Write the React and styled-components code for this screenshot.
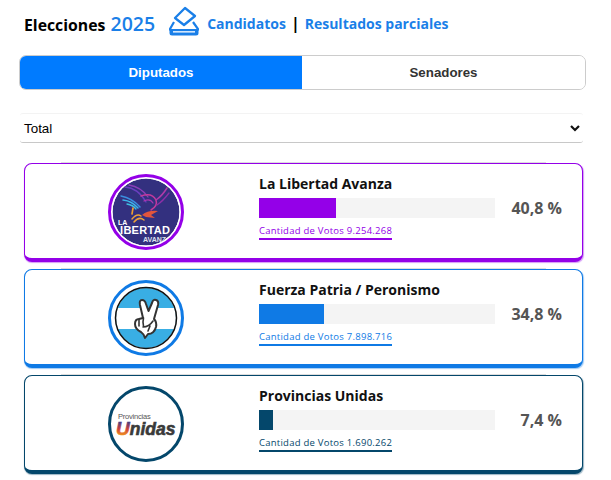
import React from "react";
import styled, { createGlobalStyle } from "styled-components";

const Global = createGlobalStyle`
  html, body { margin: 0; padding: 0; background: #fff; }
  body { font-family: "Open Sans", sans-serif; overflow: hidden; }
  * { box-sizing: border-box; }
`;

const Page = styled.div`
  width: 611px;
  height: 480px;
  padding: 11px 25px 0 19px;
  overflow: hidden;
`;
const Header = styled.header`
  display: flex;
  align-items: center;
  height: 24px;
  margin-left: 5px;
`;
const Title = styled.h1`
  margin: 0;
  font-size: 15.8px;
  font-weight: 700;
  color: #000;
  white-space: nowrap;
  span { color: #1a7fe8; font-size: 19.5px; font-weight: 600; margin-left: 1px; }
`;
const BallotIcon = styled.svg`
  width: 30px;
  height: 30px;
  margin: -5px 8px 0 14px;
  flex: none;
`;
const NavLink = styled.a`
  color: #1a7fe8;
  font-size: 14px;
  font-weight: 700;
  white-space: nowrap;
`;
const Sep = styled.span`
  color: #000;
  font-size: 16px;
  font-weight: 700;
  margin: 0 5px;
`;
const Tabs = styled.div`
  display: grid;
  grid-template-columns: 282px 1fr;
  height: 35px;
  margin-top: 20px;
  border: 1px solid #ccc;
  border-radius: 7px;
  overflow: hidden;
`;
const Tab = styled.div`
  display: flex;
  align-items: center;
  justify-content: center;
  font-family: "Liberation Sans", Arial, sans-serif;
  font-size: 13.3px;
  font-weight: 700;
  background: ${p => (p.$active ? "#007bff" : "#fff")};
  color: ${p => (p.$active ? "#fff" : "#333")};
`;
const Select = styled.div`
  display: flex;
  align-items: center;
  justify-content: space-between;
  height: 30px;
  margin: 23px 3px 0 1px;
  padding: 0 3px 0 4px;
  font-family: "Liberation Sans", Arial, sans-serif;
  font-size: 13.4px;
  color: #000;
  border-radius: 3px;
  border-top: 1px solid #f3f3f3;
  border-bottom: 1px solid #c8c8c8;
`;
const Chevron = styled.svg`
  width: 10px;
  height: 8px;
`;
const Cards = styled.div`
  display: flex;
  flex-direction: column;
  gap: 7px;
  margin: 20px 3px 0 5px;
`;
const Card = styled.article`
  position: relative;
  display: grid;
  grid-template-columns: 234px 236px 1fr;
  height: 99px;
  border: 1px solid ${p => p.$color};
  border-bottom-width: 4px;
  border-radius: 8px;
  box-shadow: 0.5px 1px 1px ${p => p.$color}66;
  background: #fff;
  &::before {
    content: "";
    position: absolute;
    top: -2px;
    left: 36px;
    right: 36px;
    height: 1px;
    background: #ddd;
  }
`;
const LogoCell = styled.div`
  display: flex;
  align-items: center;
  justify-content: center;
  padding: 0 0 0 8px;
`;
const LogoSvg = styled.svg`
  width: 76px;
  height: 76px;
  margin-top: 1px;
`;
const Info = styled.div`
  display: flex;
  flex-direction: column;
  padding-top: 10px;
`;
const Name = styled.div`
  font-size: 14px;
  font-weight: 700;
  line-height: 20px;
  color: #111;
`;
const Track = styled.div`
  height: 20px;
  margin-top: 4px;
  background: #f4f4f4;
`;
const Fill = styled.div`
  height: 100%;
  background: ${p => p.$color};
`;
const Votes = styled.div`
  align-self: flex-start;
  margin-top: 6px;
  font-size: 9.5px;
  line-height: 14px;
  letter-spacing: 0.25px;
  color: ${p => p.$color};
  border-bottom: 2px solid ${p => p.$color};
`;
const Percent = styled.div`
  display: flex;
  align-items: center;
  justify-content: flex-end;
  padding: 0 20px 7px 0;
  font-size: 16px;
  font-weight: 700;
  color: #555;
`;

const Libertad = () => (
  <LogoSvg viewBox="0 0 76 76">
    <circle cx="38" cy="38" r="36.5" fill="#fff" stroke="#9400e8" strokeWidth="3" />
    <clipPath id="lla"><circle cx="38" cy="38" r="33.5" /></clipPath>
    <g clipPath="url(#lla)">
      <circle cx="38" cy="38" r="33.5" fill="#33307f" />
      <g fill="none" strokeLinecap="round">
        <path d="M17 13 Q30 14 38 28" stroke="#6a3fc0" strokeWidth="1.3" />
        <path d="M21 11 Q33 13 40 23" stroke="#8a3fb8" strokeWidth="1.3" />
        <path d="M13 22 Q24 24 32 33" stroke="#3a8fe0" strokeWidth="1.5" />
        <path d="M15 26 Q24 27 30 34" stroke="#3cb4e8" strokeWidth="1.5" />
        <path d="M19 30 Q25 31 28 35" stroke="#3fc0e0" strokeWidth="1.3" />
        <path d="M33 22 Q44 18 48 26 Q50 32 43 36" stroke="#c23a9c" strokeWidth="1.5" />
        <path d="M36 27 Q42 24 45 29" stroke="#a936b0" strokeWidth="1.2" />
        <path d="M48 26 Q54 22 59 14" stroke="#b03aa8" strokeWidth="1.5" />
        <path d="M49 31 Q55 27 61 19" stroke="#8d2fa8" strokeWidth="1.3" />
        <path d="M25 34 L24 40" stroke="#f0a030" strokeWidth="1.6" />
        <path d="M24 45 Q29 39 33 42 M26 48 Q31 42 36 46" stroke="#eda23a" strokeWidth="1.5" />
      </g>
      <path d="M34 41 Q40 36 50 37 L43 41 L47 44 L38 43Z" fill="#e2553c" />
      <text x="10" y="51" fontFamily="Liberation Sans, sans-serif" fontSize="7" fontWeight="700" fill="#fff">LA</text>
      <text x="5" y="60" fontFamily="Liberation Sans, sans-serif" fontSize="11" fontWeight="700" letterSpacing="0.3" fill="#fff">LIBERTAD</text>
      <text x="35" y="67.5" fontFamily="Liberation Sans, sans-serif" fontSize="7" fontWeight="700" fill="#dfe0ee">AVANZA</text>
    </g>
  </LogoSvg>
);

const Fuerza = () => (
  <LogoSvg viewBox="0 0 76 76">
    <circle cx="38" cy="38" r="36.5" fill="#fff" stroke="#0f7ae5" strokeWidth="3" />
    <clipPath id="fp"><circle cx="38" cy="38" r="30" /></clipPath>
    <g clipPath="url(#fp)">
      <rect width="76" height="76" fill="#39aee4" />
      <rect y="28" width="76" height="21" fill="#fff" />
    </g>
    <circle cx="38" cy="38" r="30.5" fill="none" stroke="#111" strokeWidth="1.5" />
    <path d="M32 25 Q31 20 34 20 Q37 20 38 24 L40.5 31 L44 23 Q45 19 48 20 Q51 21 50 25 L46 39 Q49 42 48 47 Q46 54 40 54 L37 58 Q36 54 33 52 Q27 49 27 44 Q27 39 31 39 L35 38 Z" fill="#fff" stroke="#333" strokeWidth="2" strokeLinejoin="round" />
    <path d="M31 39 L31 46 M35.5 38 Q34.5 42 35.5 46 M35 47 Q41 47 45 41 M40 51 L42 46" fill="none" stroke="#333" strokeWidth="1.6" strokeLinecap="round" />
  </LogoSvg>
);

const Unidas = () => (
  <LogoSvg viewBox="0 0 76 76">
    <defs>
      <linearGradient id="un" x1="0" y1="0" x2="0" y2="1">
        <stop offset="0.15" stopColor="#2d3d90" />
        <stop offset="0.55" stopColor="#d0403a" />
        <stop offset="0.85" stopColor="#f0941f" />
      </linearGradient>
    </defs>
    <circle cx="38" cy="38" r="36.5" fill="#fff" stroke="#04476b" strokeWidth="3" />
    <text x="10" y="33" fontFamily="Liberation Sans, sans-serif" fontSize="7.5" letterSpacing="-0.2" fill="#555">Provincias</text>
    <text x="8" y="48.5" fontFamily="Liberation Sans, sans-serif" fontStyle="italic" fontWeight="700" strokeWidth="0.6">
      <tspan fontSize="19" fill="url(#un)" stroke="url(#un)">U</tspan>
      <tspan fontSize="17.5" fill="#3a3a3a" stroke="#3a3a3a">nidas</tspan>
    </text>
  </LogoSvg>
);

const data = [
  { name: "La Libertad Avanza", color: "#9400e8", pct: 32.7, label: "40,8 %", votes: "9.254.268", Logo: Libertad },
  { name: "Fuerza Patria / Peronismo", color: "#0f7ae5", pct: 27.6, label: "34,8 %", votes: "7.898.716", Logo: Fuerza },
  { name: "Provincias Unidas", color: "#04476b", pct: 5.9, label: "7,4 %", votes: "1.690.262", Logo: Unidas },
];

export default function App() {
  return (
    <Page>
      <Global />
      <Header>
        <Title>Elecciones <span>2025</span></Title>
        <BallotIcon viewBox="0 0 30 30">
          <path d="M16 2 L26 10 L15 19 L6 12 Z" fill="none" stroke="#1a7fe8" strokeWidth="2.3" strokeLinejoin="round" />
          <path d="M5 16 L1 23 Q0.8 24 2 24 H28 Q29.2 24 29 23 L24 16" fill="none" stroke="#1a7fe8" strokeWidth="2.2" />
          <path d="M0.5 23 H29.5 V27 Q29.5 29.5 27 29.5 H3 Q0.5 29.5 0.5 27 Z" fill="#1a7fe8" />
          <rect x="4" y="25.2" width="22" height="1.3" fill="#fff" />
        </BallotIcon>
        <NavLink>Candidatos</NavLink>
        <Sep>|</Sep>
        <NavLink>Resultados parciales</NavLink>
      </Header>
      <Tabs>
        <Tab $active>Diputados</Tab>
        <Tab>Senadores</Tab>
      </Tabs>
      <Select>
        <span>Total</span>
        <Chevron viewBox="0 0 10 8">
          <path d="M1 2 L5 6 L9 2" fill="none" stroke="#111" strokeWidth="2.2" />
        </Chevron>
      </Select>
      <Cards>
        {data.map(d => (
          <Card key={d.name} $color={d.color}>
            <LogoCell><d.Logo /></LogoCell>
            <Info>
              <Name>{d.name}</Name>
              <Track><Fill $color={d.color} style={{ width: `${d.pct}%` }} /></Track>
              <Votes $color={d.color}>Cantidad de Votos {d.votes}</Votes>
            </Info>
            <Percent>{d.label}</Percent>
          </Card>
        ))}
      </Cards>
    </Page>
  );
}
